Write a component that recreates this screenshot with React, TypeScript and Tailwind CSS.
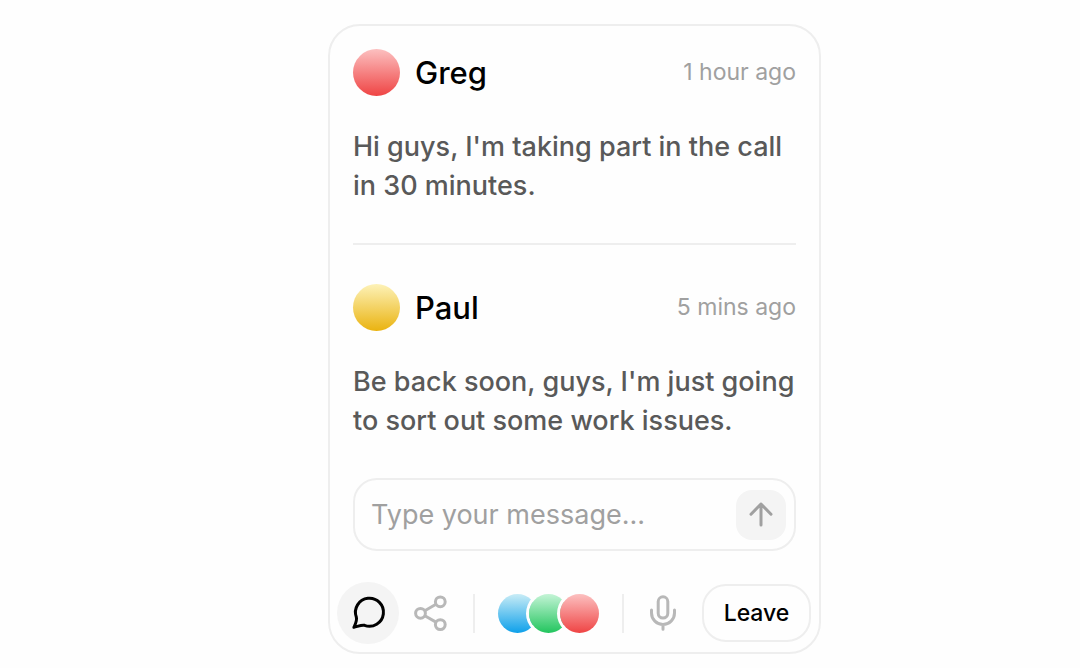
import React from "react";

type Message = {
  author: string;
  time: string;
  text: string;
  avatar: string;
};

const messages: Message[] = [
  {
    author: "Greg",
    time: "1 hour ago",
    text: "Hi guys, I'm taking part in the call in 30 minutes.",
    avatar: "from-[#fcc0c0] to-[#ef4444]",
  },
  {
    author: "Paul",
    time: "5 mins ago",
    text: "Be back soon, guys, I'm just going to sort out some work issues.",
    avatar: "from-[#fdf2b8] to-[#eab310]",
  },
];

const participants = [
  { name: "Anna", color: "from-[#c8ecf6] to-[#0ea0ea]" },
  { name: "Mike", color: "from-[#c4f4d6] to-[#22c55e]" },
  { name: "Greg", color: "from-[#fcc0c0] to-[#ef4444]" },
];

function ChatIcon() {
  return (
    <svg width="40" height="40" viewBox="0 0 40 40" fill="none" stroke="currentColor" strokeWidth="3" strokeLinecap="round" strokeLinejoin="round" aria-hidden="true">
      <path d="M8.3 24A14 14 0 1 1 16.5 32.3C14 31.5 9.5 33.5 5.9 34.3C7.6 30.5 9.3 27.5 8.3 24Z" />
    </svg>
  );
}

function ShareIcon() {
  return (
    <svg width="40" height="40" viewBox="0 0 40 40" fill="none" stroke="currentColor" strokeWidth="3" aria-hidden="true">
      <circle cx="29.3" cy="8.8" r="4.9" />
      <circle cx="9.5" cy="20.3" r="4.9" />
      <circle cx="29.3" cy="31.6" r="4.9" />
      <path d="M13.8 17.8L25 11.3M13.8 22.8L25 29.1" />
    </svg>
  );
}

function MicIcon() {
  return (
    <svg width="40" height="40" viewBox="0 0 40 40" fill="none" stroke="currentColor" strokeWidth="3" strokeLinecap="round" aria-hidden="true">
      <rect x="15.2" y="3.8" width="9.6" height="21.2" rx="4.8" />
      <path d="M8.5 17V20A11.5 11.5 0 0 0 31.5 20V17M20 31.5V36.3" />
    </svg>
  );
}

function ArrowIcon() {
  return (
    <svg width="30" height="30" viewBox="0 0 30 30" fill="none" stroke="currentColor" strokeWidth="3" strokeLinecap="round" strokeLinejoin="round" aria-hidden="true">
      <path d="M15 25V4M5 14.2L15 4L25 14.2" />
    </svg>
  );
}

export default function App() {
  return (
    <div className="flex min-h-screen items-start justify-center bg-[#fefefe] pt-6 pl-[69px] font-['Inter',sans-serif]">
      <main className="w-full max-w-[493px] rounded-[32px] border-2 border-[#eeeeee]">
        <div className="px-[23px] pt-[23px]">
          <div className="divide-y-2 divide-[#eeeeee]">
            {messages.map((message) => (
              <article key={message.author} className="pb-[38px] not-first:pt-[39px]">
                <header className="flex items-center">
                  <span className={`size-[47px] shrink-0 rounded-full bg-linear-to-b/srgb ${message.avatar}`} />
                  <h2 className="ml-[15px] text-[31px] leading-[47px] font-medium text-black">{message.author}</h2>
                  <time className="ml-auto text-[23px] leading-[47px] text-[#a0a0a0]">{message.time}</time>
                </header>
                <p className="mt-[31px] text-[27px] leading-[39px] font-medium text-[#595959]">{message.text}</p>
              </article>
            ))}
          </div>
          <form className="flex h-[73px] items-center rounded-3xl border-2 border-[#eeeeee] pr-2 pl-4" onSubmit={(event) => event.preventDefault()}>
            <input
              type="text"
              aria-label="Message"
              placeholder="Type your message..."
              className="h-[50px] min-w-0 flex-1 bg-transparent text-[27px] text-black outline-none placeholder:text-[#a0a0a0]"
            />
            <button type="submit" aria-label="Send" className="flex size-[50px] shrink-0 items-center justify-center rounded-2xl bg-[#f4f4f4] text-[#a0a0a0]">
              <ArrowIcon />
            </button>
          </form>
        </div>
        <div className="mt-[31px] flex items-center pr-2 pb-2 pl-[7px]">
          <div className="flex items-center">
            <button type="button" aria-label="Chat" className="flex size-[62px] items-center justify-center rounded-full bg-[#f4f4f4] text-black">
              <ChatIcon />
            </button>
            <button type="button" aria-label="Share" className="ml-3 text-[#b8b8b8]">
              <ShareIcon />
            </button>
          </div>
          <div className="ml-[22px] flex items-center gap-[23px]">
            <span className="h-[39px] w-0.5 bg-[#eeeeee]" />
            <div className="flex -space-x-2">
              {participants.map((person) => (
                <span key={person.name} className={`size-[39px] rounded-full bg-linear-to-b/srgb ring-[3px] ring-[#fefefe] ${person.color}`} />
              ))}
            </div>
            <span className="h-[39px] w-0.5 bg-[#eeeeee]" />
          </div>
          <div className="ml-auto flex items-center gap-[19px]">
            <button type="button" aria-label="Microphone" className="text-[#b8b8b8]">
              <MicIcon />
            </button>
            <button type="button" className="h-[58px] w-[109px] rounded-3xl border-2 border-[#eeeeee] text-[23px] font-medium text-black">
              Leave
            </button>
          </div>
        </div>
      </main>
    </div>
  );
}
